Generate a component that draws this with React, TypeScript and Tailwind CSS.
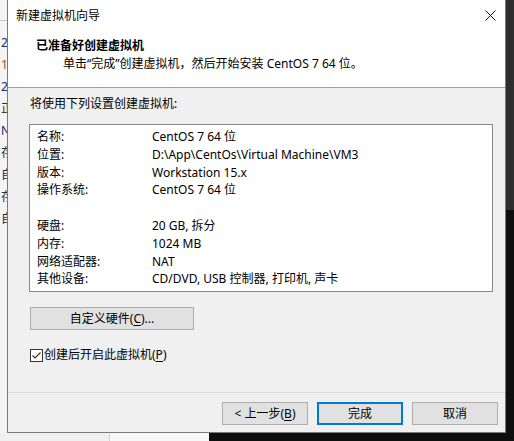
import { Fragment } from 'react'

const font = { fontFamily: '"Noto Sans", "Noto Sans CJK SC", sans-serif' }

const rows: [string, string][] = [
  ['名称:', 'CentOS 7 64 位'],
  ['位置:', 'D:\\App\\CentOs\\Virtual Machine\\VM3'],
  ['版本:', 'Workstation 15.x'],
  ['操作系统:', 'CentOS 7 64 位'],
  ['', ''],
  ['硬盘:', '20 GB, 拆分'],
  ['内存:', '1024 MB'],
  ['网络适配器:', 'NAT'],
  ['其他设备:', 'CD/DVD, USB 控制器, 打印机, 声卡'],
]

// bits of the app window behind the dialog
const behind = [
  { t: '2', c: 'text-[#1c2c6e]' },
  { t: '1', c: 'text-[#8a5a10]' },
  { t: '2', c: 'text-[#1c2c6e]' },
  { t: '正', c: 'text-[#2a2a2a]' },
  { t: 'N', c: 'text-[#1c2c6e]' },
  { t: '存', c: 'text-[#2a2a2a]' },
  { t: '自', c: 'text-[#2a2a2a]' },
  { t: '存', c: 'text-[#2a2a2a]' },
  { t: '自', c: 'text-[#2a2a2a]' },
]

function Btn({ children, primary, className = '' }: { children: React.ReactNode; primary?: boolean; className?: string }) {
  return (
    <button
      className={
        'flex h-[23px] items-center justify-center bg-[#e1e1e1] text-[12px] leading-none text-black ' +
        (primary ? 'border-2 border-[#0078d7] ' : 'border border-[#adadad] ') +
        className
      }
    >
      {children}
    </button>
  )
}

export default function App() {
  return (
    <div className="relative h-[441px] w-[514px] overflow-hidden bg-[#f2f2f2] text-[12px] text-black" style={font}>
      {/* left strip of the window underneath */}
      <div className="absolute left-0 top-0 h-[441px] w-[7px] overflow-hidden bg-[#f4f4f4]">
        <div className="mt-[20px] h-px w-full bg-[#c8c8c8]" />
        <div className="flex flex-col pl-px pt-[13px]">
          {behind.map((b, i) => (
            <span key={i} className={'h-[22px] whitespace-nowrap text-[12px] leading-[18px] ' + b.c}>
              {b.t}
            </span>
          ))}
        </div>
      </div>

      {/* right edge: dark window */}
      <div className="absolute right-0 top-0 flex h-[441px] w-[8px] flex-col">
        <div className="h-[210px] bg-[#2e2e2e]" />
        <div className="flex-1 bg-[#0e0e0e]" />
      </div>

      {/* bottom strip */}
      <div className="absolute bottom-0 left-0 flex h-[8px] w-[514px]">
        <div className="w-[109px] bg-[#f0f0f0]" />
        <div className="w-px bg-[#d4d4d4]" />
        <div className="w-[99px] bg-[#f7f7f7]" />
        <div className="flex-1 bg-[#0e0e0e]" />
      </div>

      {/* dialog */}
      <div className="absolute left-[7px] top-0 flex h-[433px] w-[499px] flex-col border-x border-b border-[#7a7a7a] bg-[#f0f0f0]">
        {/* title bar */}
        <div className="flex h-[31px] items-center justify-between bg-white pl-[8px] pr-[9px]">
          <span className="text-[12px] leading-none">新建虚拟机向导</span>
          <svg width="11" height="11" viewBox="0 0 11 11" className="mr-[0px]">
            <path d="M0.5 0.5 L10.5 10.5 M10.5 0.5 L0.5 10.5" stroke="#111" strokeWidth="1" />
          </svg>
        </div>

        {/* header */}
        <div className="flex h-[56px] flex-col bg-white pt-[7px]">
          <div className="pl-[28px] text-[12px] font-bold leading-[16px]">已准备好创建虚拟机</div>
          <div className="pl-[55px] pt-[2px] text-[12px] leading-[16px]">单击“完成”创建虚拟机，然后开始安装 CentOS 7 64 位。</div>
        </div>
        <div className="h-px bg-[#a0a0a0]" />

        {/* body */}
        <div className="flex h-[304px] flex-col pl-[21px]">
          <div className="mt-[8px] pl-px leading-[16px]">将使用下列设置创建虚拟机:</div>
          <div className="mt-[12px] h-[168px] w-[464px] border border-[#828790] bg-white pl-[7px] pt-[3px]">
            <div className="grid grid-cols-[115px_1fr]">
              {rows.map(([k, v], i) => (
                <Fragment key={i}>
                  <span className="h-[17.8px] whitespace-nowrap leading-[18px]">{k}</span>
                  <span className="h-[17.8px] whitespace-nowrap leading-[18px]">{v}</span>
                </Fragment>
              ))}
            </div>
          </div>
          <Btn className="ml-px mt-[15px] w-[164px]">
            自定义硬件(<span className="underline underline-offset-2">C</span>)...
          </Btn>
          <div className="ml-px mt-[17px] flex items-center gap-[1px]">
            <svg width="13" height="13" viewBox="0 0 13 13">
              <rect x="0.5" y="0.5" width="12" height="12" fill="#fff" stroke="#333" />
              <path d="M2.5 6.5 L5 9 L10.5 3.5" fill="none" stroke="#333" strokeWidth="1.2" />
            </svg>
            <span className="leading-[16px]">
              创建后开启此虚拟机(<span className="underline underline-offset-2">P</span>)
            </span>
          </div>
        </div>

        {/* footer */}
        <div className="flex h-[40px] justify-end gap-[9px] border-t border-[#dcdcdc] pr-[7px] pt-[9px]">
          <Btn className="w-[86px]">
            &lt; 上一步(<span className="underline underline-offset-2">B</span>)
          </Btn>
          <Btn primary className="w-[86px]">
            完成
          </Btn>
          <Btn className="w-[86px]">取消</Btn>
        </div>
      </div>
    </div>
  )
}
